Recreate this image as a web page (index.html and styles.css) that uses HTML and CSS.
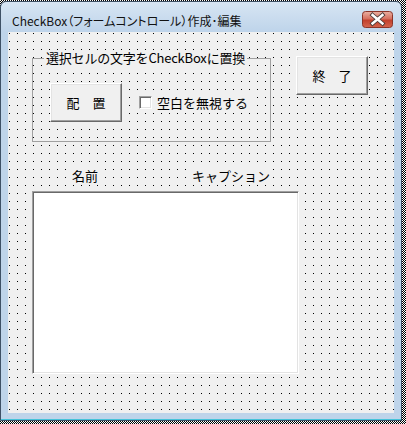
FILE: index.html
```html
<!DOCTYPE html>
<html lang="ja">
<head>
    <meta charset="UTF-8">
    <title>CheckBox（フォームコントロール）作成･編集</title>
    <link rel="stylesheet" href="styles.css">
</head>
<body>
    <div class="window">
        <div class="titlebar">
            <span class="title">CheckBox（フォームコントロール）作成･編集</span>
            <div class="close" title="閉じる">
                <svg width="31" height="17" viewBox="0 0 31 17">
                    <defs>
                        <linearGradient id="closeGrad" x1="0" y1="0" x2="0" y2="1">
                            <stop offset="0" stop-color="#eab1a3"/>
                            <stop offset="0.45" stop-color="#d6705f"/>
                            <stop offset="0.55" stop-color="#c2402c"/>
                            <stop offset="1" stop-color="#d5664e"/>
                        </linearGradient>
                    </defs>
                    <rect x="0.5" y="0.5" width="30" height="16" rx="3" fill="url(#closeGrad)" stroke="#8b3428"/>
                    <path d="M10.5 4 L20.5 12.5 M20.5 4 L10.5 12.5" stroke="#4a3a38" stroke-width="4.2" stroke-linecap="square"/>
                    <path d="M10.5 4 L20.5 12.5 M20.5 4 L10.5 12.5" stroke="#fff" stroke-width="2.4" stroke-linecap="square"/>
                </svg>
            </div>
        </div>
        <div class="client">
            <div class="top-row">
                <fieldset class="frame">
                    <legend>選択セルの文字をCheckBoxに置換</legend>
                    <div class="frame-body">
                        <button class="cmd">配　置</button>
                        <label class="check"><span class="box"></span>空白を無視する</label>
                    </div>
                </fieldset>
                <button class="cmd exit">終　了</button>
            </div>
            <div class="heads">
                <span class="head name">名前</span>
                <span class="head caption">キャプション</span>
            </div>
            <div class="listbox"></div>
        </div>
    </div>
</body>
</html>
```

FILE: styles.css
```css
body {
    margin: 0;
    background: repeating-conic-gradient(#000 0 25%, #fff 0 50%) 0 0 / 2px 2px;
    font-family: "Noto Sans CJK JP", "Noto Sans", sans-serif;
    color: #000;
}

.window {
    box-sizing: border-box;
    margin-top: 1px;
    width: 402px;
    height: 420px;
    border: 1px solid #3e5166;
    border-radius: 6px 6px 0 0;
    background: linear-gradient(#d7e5f3, #bed4ea 30px);
    box-shadow: inset 0 -1px #45c3d9;
    display: flex;
    flex-direction: column;
}

.titlebar {
    height: 30px;
    display: flex;
    justify-content: space-between;
    align-items: flex-start;
    padding: 0 8px 0 11px;
}

.title {
    margin-top: 11px;
    font-size: 12px;
    line-height: 16px;
    font-feature-settings: "palt";
    color: #111;
}

.close {
    margin-top: 9px;
    width: 31px;
    height: 17px;
}

.close svg {
    display: block;
}

.client {
    box-sizing: border-box;
    margin: 0 7px;
    height: 381px;
    padding-left: 24px;
    background-color: #f0f0f0;
    background-image: conic-gradient(at 1px 1px, transparent 75%, #000 0);
    background-size: 8px 8px;
    background-position: 1px 1px;
    font-size: 13px;
    line-height: 16px;
}

.top-row {
    display: flex;
    align-items: flex-start;
}

.frame {
    box-sizing: border-box;
    width: 239px;
    margin: 18px 0 0;
    padding: 0;
    border: 1px solid #a0a0a0;
}

.frame legend {
    margin-left: 11px;
    padding: 0 2px;
    background: #f0f0f0;
    letter-spacing: -0.2px;
}

.frame-body {
    display: flex;
    align-items: center;
    padding: 17px 0 19px 17px;
}

.cmd {
    box-sizing: border-box;
    width: 72px;
    height: 39px;
    padding: 0;
    margin: 0;
    font: inherit;
    color: #000;
    background: #f0f0f0;
    border: 1px solid;
    border-color: #fff #696969 #696969 #fff;
    box-shadow: inset -1px -1px #a0a0a0, inset 1px 1px #e3e3e3;
}

.exit {
    margin: 24px 0 0 25px;
}

.check {
    display: flex;
    align-items: center;
    gap: 5px;
    margin-left: 15px;
    padding: 2px 5px 2px 2px;
    background: #f0f0f0;
}

.box {
    box-sizing: border-box;
    width: 13px;
    height: 13px;
    background: #fff;
    border: 1px solid;
    border-color: #a0a0a0 #fff #fff #a0a0a0;
    box-shadow: inset 1px 1px #696969, inset -1px -1px #e3e3e3;
}

.heads {
    display: flex;
    margin-top: 26px;
}

.head {
    padding: 0 3px;
    background: #f0f0f0;
}

.name {
    margin-left: 37px;
}

.caption {
    margin-left: 88px;
}

.listbox {
    box-sizing: border-box;
    width: 267px;
    height: 183px;
    margin-top: 7px;
    background: #fff;
    border: 1px solid;
    border-color: #a0a0a0 #fff #fff #a0a0a0;
    box-shadow: inset 1px 1px #696969, inset -1px -1px #e3e3e3;
}
```
